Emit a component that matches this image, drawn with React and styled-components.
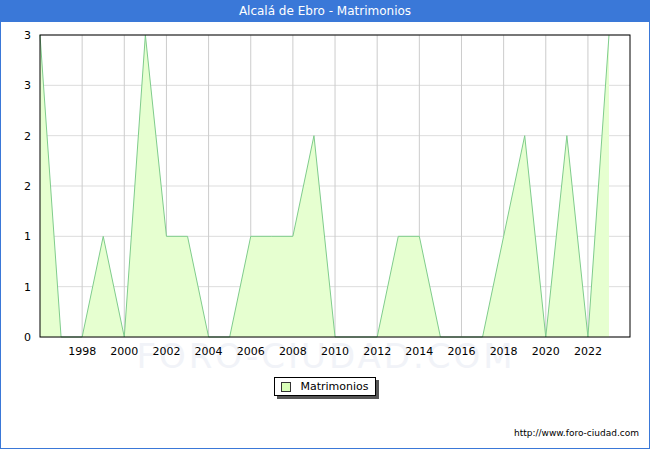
import React from 'react';
import styled, {createGlobalStyle} from 'styled-components';

const Global = createGlobalStyle`
  body { margin: 0; font-family: "DejaVu Sans", sans-serif; }
`;

const Frame = styled.div`
  width: 648px;
  height: 448px;
  border: 1px solid #3a78d8;
  border-top: none;
  display: flex;
  flex-direction: column;
  background: #fff;
`;

const Title = styled.div`
  height: 22px;
  margin: 0 -1px;
  background: #3a78d8;
  color: #fff;
  font-size: 12px;
  display: flex;
  align-items: center;
  justify-content: center;
`;

const Legend = styled.div`
  align-self: center;
  margin: 4px 0 0 0;
  border: 1px solid #000;
  box-shadow: 3px 3px 0 #555;
  padding: 2px 6px;
  font-size: 11px;
  display: flex;
  align-items: center;
  gap: 9px;
`;

const Swatch = styled.span`
  width: 8px;
  height: 8px;
  border: 1px solid #333;
  background: #d9ffb8;
`;

const Footer = styled.div`
  margin-top: auto;
  padding: 0 10px 10px 0;
  text-align: right;
  font-size: 9px;
  color: #000;
`;

const data = [3,0,0,1,0,3,1,1,0,0,1,1,1,2,0,0,0,1,1,0,0,0,1,2,0,2,0,3];
const X0 = 40, X1 = 630, Y0 = 35, Y1 = 337;
const step = (609 - 40) / 27;
const xs = i => X0 + i * step;
const ys = v => Y1 - v * (Y1 - Y0) / 3;

function Chart() {
  const line = data.map((v, i) => `${xs(i)},${ys(v)}`).join(' ');
  const area = `${xs(0)},${Y1} ${line} ${xs(27)},${Y1}`;
  const yTicks = [0, 0.5, 1, 1.5, 2, 2.5, 3];
  const yLabels = ['0','1','1','2','2','3','3'];
  const years = [];
  for (let y = 1998; y <= 2022; y += 2) years.push(y);
  return (
    <svg width="648" height="351" viewBox="1 22 648 351">
      <text x="326" y="368" textAnchor="middle" fontSize="34" fill="#f1f3f8" letterSpacing="3">FORO-CIUDAD.COM</text>
      {yTicks.map(t => <line key={t} x1={X0} x2={X1} y1={ys(t)} y2={ys(t)} stroke="#ddd" />)}
      {years.map(y => <line key={y} x1={xs(y-1996)} x2={xs(y-1996)} y1={Y0} y2={Y1} stroke="#ccc" />)}
      <polygon points={area} fill="#e6ffd0" />
      <polyline points={line} fill="none" stroke="#7fcc8c" strokeWidth="1" />
      <rect x={X0} y={Y0} width={X1-X0} height={Y1-Y0} fill="none" stroke="#000" />
      {yTicks.map((t, i) => <text key={t} x="31" y={ys(t)+4} textAnchor="end" fontSize="11">{yLabels[i]}</text>)}
      {years.map(y => <text key={y} x={xs(y-1996)} y="355" textAnchor="middle" fontSize="11">{y}</text>)}
    </svg>
  );
}

export default function App() {
  return (
    <>
      <Global />
      <Frame>
        <Title>Alcalá de Ebro - Matrimonios</Title>
        <Chart />
        <Legend><Swatch />Matrimonios</Legend>
        <Footer>http://www.foro-ciudad.com</Footer>
      </Frame>
    </>
  );
}
